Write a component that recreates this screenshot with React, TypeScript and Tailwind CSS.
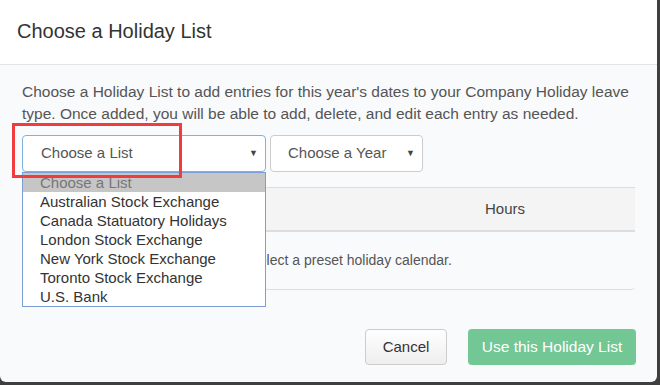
import { useState } from 'react';

const lists = [
  'Choose a List',
  'Australian Stock Exchange',
  'Canada Statuatory Holidays',
  'London Stock Exchange',
  'New York Stock Exchange',
  'Toronto Stock Exchange',
  'U.S. Bank',
];

export default function App() {
  const [selected] = useState(0);

  return (
    <div className="relative w-[660px] h-[385px] overflow-hidden bg-[#3f3f3f] font-['Liberation_Sans',Arial,sans-serif] text-[#333]">
      {/* Modal */}
      <div className="w-[657px] h-[382px] bg-[#f9fafc] rounded-br-[6px] rounded-bl-[6px] flex flex-col">
        {/* Header */}
        <div className="h-[65px] bg-white border-b border-[#e3e3e3] px-[17px] flex items-center">
          <h1 className="text-[20px] text-[#333] leading-none pb-[2px]">Choose a Holiday List</h1>
        </div>

        {/* Body */}
        <div className="px-[22px] pt-[16px]">
          <p className="text-[15.5px] leading-[22px] text-[#555]">
            Choose a Holiday List to add entries for this year's dates to your Company Holiday leave type. Once added, you will be able to add, delete, and edit each entry as needed.
          </p>

          <div className="flex gap-[4px] mt-[10px]">
            <div className="w-[244px] h-[37px] bg-white border border-[#7fb1e2] rounded-[4px] flex items-center justify-between pl-[18px] pr-[7px] text-[15px] text-[#555]">
              <span>Choose a List</span>
              <span className="text-[9px] text-[#444]">▼</span>
            </div>
            <div className="w-[153px] h-[37px] bg-white border border-[#cccccc] rounded-[4px] flex items-center justify-between pl-[17px] pr-[7px] text-[15px] text-[#555]">
              <span>Choose a Year</span>
              <span className="text-[9px] text-[#444]">▼</span>
            </div>
          </div>

          {/* Table */}
          <div className="mt-[15px] w-[613px] border-t border-[#dddddd] border-b rounded-b-[4px]">
            <div className="h-[44px] bg-[#f4f4f4] border-b-2 border-[#dddddd] grid grid-cols-[353px_1fr] items-center text-[15px] text-[#444]">
              <span />
              <span className="text-center">Hours</span>
            </div>
            <div className="h-[57px] flex items-center justify-center text-[14px] text-[#555]">
              Please select a preset holiday calendar.
            </div>
          </div>
        </div>

        {/* Footer */}
        <div className="mt-auto flex justify-end gap-[21px] pr-[21px] pb-[17px]">
          <button className="w-[82px] h-[36px] rounded-[4px] border border-[#cccccc] bg-gradient-to-b from-white to-[#eeeeee] text-[15px] text-[#333]">
            Cancel
          </button>
          <button className="w-[168px] h-[36px] rounded-[4px] bg-[#72c795] text-[15.5px] text-white">
            Use this Holiday List
          </button>
        </div>
      </div>

      {/* Open dropdown */}
      <div className="absolute left-[22px] top-[172px] w-[244px] bg-white border border-[#7b9fd4]">
        {lists.map((l, i) => (
          <div
            key={l}
            className={`h-[19px] leading-[19px] pl-[17px] text-[15px] ${i === selected ? 'bg-[#c6c6c6] text-[#777]' : 'text-[#333]'}`}
          >
            {l}
          </div>
        ))}
      </div>

      {/* Annotation box */}
      <div className="absolute left-[12px] top-[123px] w-[170px] h-[55px] border-[3px] border-[#f23b3f]" />
    </div>
  );
}
